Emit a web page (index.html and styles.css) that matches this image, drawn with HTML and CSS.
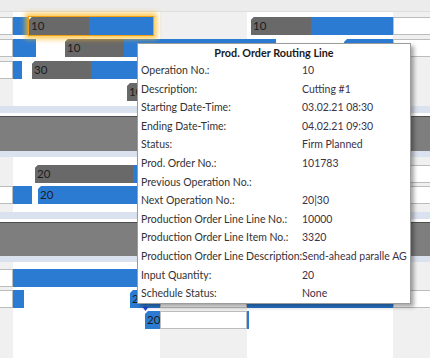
FILE: index.html
```html
<!DOCTYPE html>
<html lang="en">
<head>
  <meta charset="UTF-8" />
  <title>Production Schedule</title>
  <link rel="stylesheet" href="styles.css">
</head>
<body>

<div class="gantt">
  <div class="timeline"></div>

  <!-- Work center rows -->
  <div class="rows">
    <div class="row">
      <div class="off" style="left:-2px;width:15px"></div>
      <div class="bar" style="left:13px;width:15px"></div>
      <div class="pick" style="left:28px;width:126px">
        <div class="bar start"><span class="done" style="width:60px">10</span></div>
      </div>
      <div class="bar start" style="left:251px;width:142px"><span class="done" style="width:60px">10</span></div>
      <div class="off" style="left:393px;width:40px"></div>
    </div>
    <div class="row">
      <div class="off" style="left:-2px;width:15px"></div>
      <div class="bar" style="left:13px;width:23px"></div>
      <div class="bar start" style="left:65px;width:211px"><span class="done" style="width:59px">10</span></div>
      <div class="bar start" style="left:344px;width:49px"><span class="label">10</span></div>
      <div class="off" style="left:393px;width:40px"></div>
    </div>
    <div class="row">
      <div class="off" style="left:-2px;width:15px"></div>
      <div class="bar" style="left:13px;width:9px"></div>
      <div class="bar start" style="left:32px;width:160px"><span class="done" style="width:59px">30</span></div>
    </div>
    <div class="row">
      <div class="bar start" style="left:127px;width:100px"><span class="done" style="width:100px">10</span></div>
    </div>
  </div>

  <div class="group">
    <div class="group-cap"></div>
    <div class="group-body"></div>
    <div class="group-foot"></div>
  </div>

  <div class="rows tight">
    <div class="row">
      <div class="bar start" style="left:35px;width:300px"><span class="done" style="width:98px">20</span></div>
      <div class="off" style="left:393px;width:40px"></div>
    </div>
    <div class="row">
      <div class="off" style="left:-2px;width:15px"></div>
      <div class="bar" style="left:13px;width:19px"></div>
      <div class="bar start" style="left:38px;width:355px"><span class="label">20</span></div>
      <div class="off" style="left:393px;width:40px"></div>
    </div>
  </div>

  <div class="group second">
    <div class="group-cap"></div>
    <div class="group-body"></div>
    <div class="group-foot"></div>
  </div>

  <div class="rows tight last">
    <div class="row">
      <div class="off" style="left:-2px;width:15px"></div>
      <div class="bar" style="left:13px;width:200px"></div>
    </div>
    <div class="row">
      <div class="off" style="left:-2px;width:15px"></div>
      <div class="bar" style="left:13px;width:11px"></div>
      <div class="bar start" style="left:130px;width:30px"><span class="label">20</span></div>
      <div class="off" style="left:160px;width:87px"></div>
      <div class="bar" style="left:247px;width:146px"></div>
      <div class="off" style="left:393px;width:40px"></div>
    </div>
    <div class="row">
      <svg class="link" width="7" height="11" viewBox="0 0 7 11">
        <line x1="3.5" y1="0" x2="3.5" y2="8" stroke="#2448d8" stroke-width="1" stroke-dasharray="2 1"/>
        <polygon points="0.5,7 6.5,7 3.5,11" fill="#2448d8"/>
      </svg>
      <div class="bar start" style="left:145px;width:15px"><span class="label">20</span></div>
      <div class="off" style="left:160px;width:87px"></div>
      <div class="bar" style="left:247px;width:2px"></div>
    </div>
  </div>

  <!-- Hover tooltip -->
  <div class="tip">
    <div class="tip-title">Prod. Order Routing Line</div>
    <dl class="tip-grid">
      <dt>Operation No.:</dt><dd>10</dd>
      <dt>Description:</dt><dd>Cutting #1</dd>
      <dt>Starting Date-Time:</dt><dd>03.02.21 08:30</dd>
      <dt>Ending Date-Time:</dt><dd>04.02.21 09:30</dd>
      <dt>Status:</dt><dd>Firm Planned</dd>
      <dt>Prod. Order No.:</dt><dd>101783</dd>
      <dt>Previous Operation No.:</dt><dd></dd>
      <dt>Next Operation No.:</dt><dd>20|30</dd>
      <dt>Production Order Line Line No.:</dt><dd>10000</dd>
      <dt>Production Order Line Item No.:</dt><dd>3320</dd>
      <dt>Production Order Line Description:</dt><dd>Send-ahead paralle AG</dd>
      <dt>Input Quantity:</dt><dd>20</dd>
      <dt>Schedule Status:</dt><dd>None</dd>
    </dl>
  </div>
</div>

</body>
</html>
```

FILE: styles.css
```css
* { box-sizing: border-box; }
body {
  margin: 0;
  font-family: Lato, "Noto Sans", sans-serif;
  color: #222;
  overflow: hidden;
}

/* Chart canvas with working / non-working columns */
.gantt {
  position: relative;
  width: 430px;
  height: 358px;
  overflow: hidden;
  background: linear-gradient(to right,
    #f0f0f0 0 13px, #fff 13px 160px,
    #f0f0f0 160px 247px, #fff 247px 393px,
    #f0f0f0 393px);
}

.timeline {
  height: 12px;
  background: #ececec;
  border-bottom: 1px solid #dedede;
}

.rows { margin-top: 3px; }
.rows.tight { margin-top: 6px; }
.rows.last { margin-top: 5px; }

.row {
  position: relative;
  height: 22px;
}
.rows.tight .row { height: 21px; }

.off, .bar {
  position: absolute;
  top: 2px;
  height: 18px;
}

.off {
  background: #fff;
  border: 1px solid #bcbcbc;
}

.bar {
  display: flex;
  background: #2b7bd3;
  font-size: 11.5px;
  line-height: 17px;
  color: #1c1c1c;
  white-space: nowrap;
}

.bar.start {
  clip-path: polygon(3px 0, 100% 0, 100% 100%, 0 100%, 0 3px);
}

.bar .done {
  height: 100%;
  background: #696969;
  padding-left: 2px;
  flex-shrink: 0;
}

.bar .label { padding-left: 2px; }

/* Selected operation */
.pick {
  position: absolute;
  top: 1px;
  height: 20px;
  border: 1px solid #f2a013;
  box-shadow: 0 0 5px 3px rgba(255, 184, 30, 0.75);
  z-index: 1;
}
.pick .bar {
  top: 0;
  left: 0;
  right: 0;
  height: 100%;
}

.link {
  position: absolute;
  left: 142px;
  top: -9px;
  z-index: 2;
}

/* Work center group band */
.group { margin-top: 3px; }
.group.second { margin-top: 7px; }
.group-cap {
  height: 10px;
  background: #fff;
  border-top: 7px solid #dbe2ef;
}
.group-body {
  height: 35px;
  background: #7e7e7e;
  border-top: 1px solid #4e4e4e;
}
.group.second .group-body { height: 34px; }
.group-foot {
  height: 6px;
  background: #dbe2ef;
}

/* Tooltip */
.tip {
  position: absolute;
  left: 137px;
  top: 43px;
  width: 274px;
  background: #fff;
  border: 1px solid #9c9c9c;
  box-shadow: 3px 3px 4px rgba(0, 0, 0, 0.35);
  font-size: 10.5px;
  color: #333;
  z-index: 5;
}

.tip-title {
  text-align: center;
  font-weight: bold;
  font-size: 10.8px;
  line-height: 17px;
  color: #1a1a1a;
}

.tip-grid {
  display: grid;
  grid-template-columns: 161px 1fr;
  margin: 0;
  padding-left: 3px;
  line-height: 18.6px;
}

.tip-grid dt { white-space: nowrap; }
.tip-grid dd {
  margin: 0;
  color: #3b3246;
  white-space: nowrap;
}
```
